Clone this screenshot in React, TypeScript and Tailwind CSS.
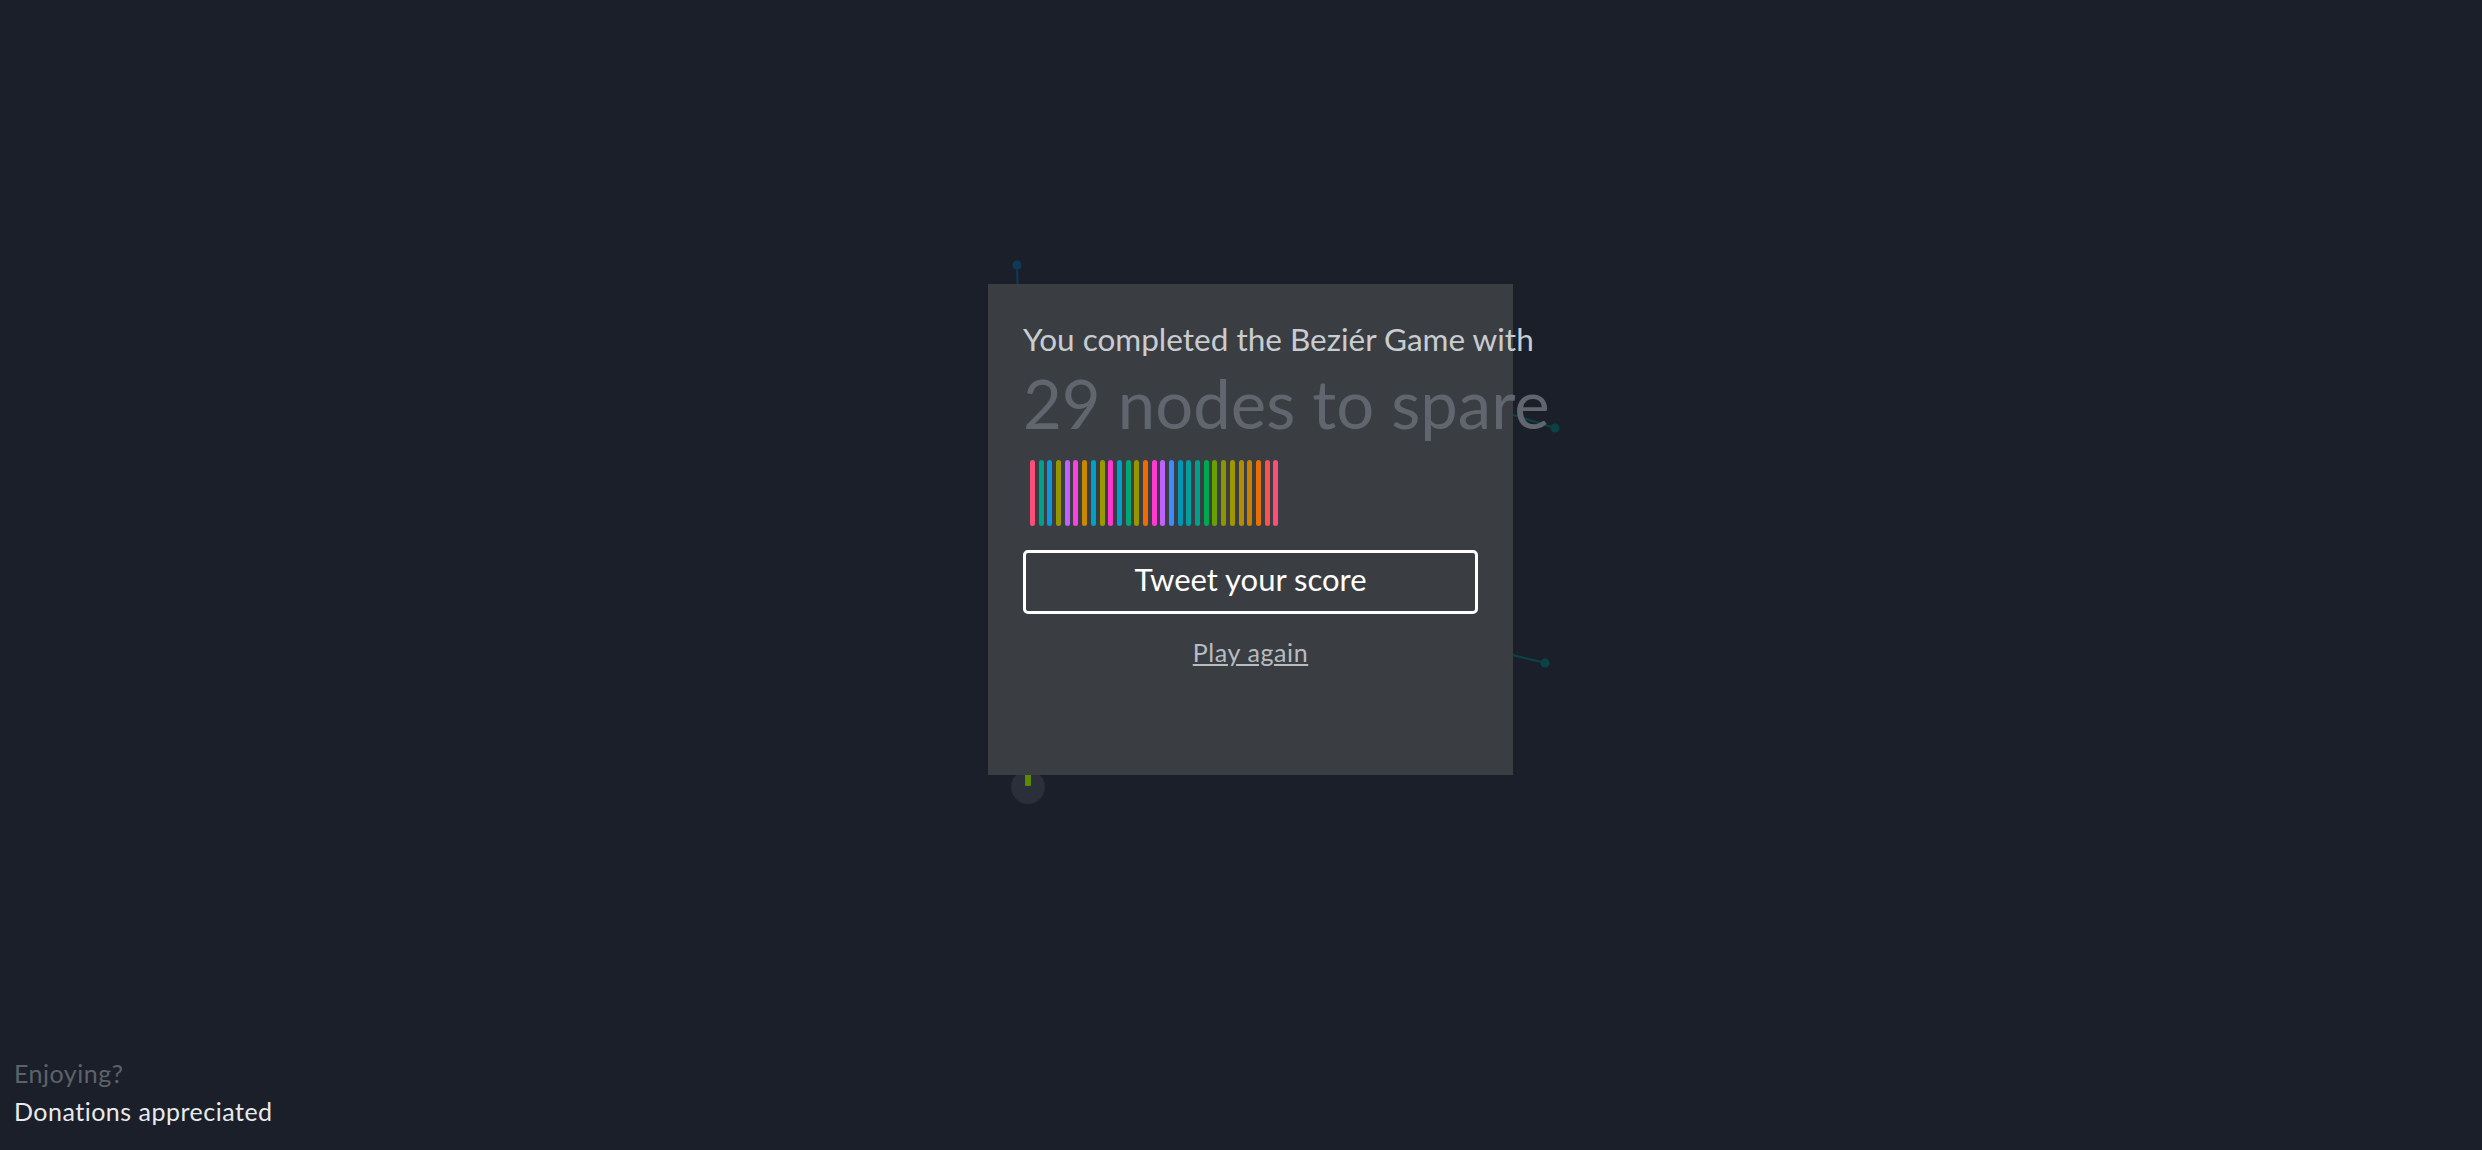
const barColors = [
  "#ff4d7a", "#00a08c", "#0a96e0", "#969600", "#c060ff", "#ff40e0", "#c88800",
  "#00a0c8", "#9a9a00", "#ff35d0", "#00a0c8", "#00a878", "#969600", "#f06a00",
  "#ff3ad0", "#c060ff", "#3a8cff", "#0096b4", "#00a0a0", "#00a08c", "#00a850",
  "#68a000", "#8c9600", "#a09600", "#b48c00", "#c88000", "#e87000", "#ff5050",
  "#ff4d7a",
]

const CanvasNodes = () => (
  <svg className="absolute inset-0 w-full h-full pointer-events-none" aria-hidden="true">
    <line x1="1017" y1="265" x2="1018" y2="300" stroke="#0e3a5a" strokeWidth="2" />
    <circle cx="1017" cy="265" r="4.5" fill="#0e3a5a" />
    <line x1="1500" y1="411" x2="1555" y2="428" stroke="#0c4246" strokeWidth="2" />
    <circle cx="1555" cy="428" r="4.5" fill="#0c4246" />
    <line x1="1500" y1="652" x2="1545" y2="663" stroke="#0c4246" strokeWidth="2" />
    <circle cx="1545" cy="663" r="4.5" fill="#0c4246" />
    <circle cx="1028" cy="787" r="17" fill="#2a2f3a" />
    <rect x="1025" y="770" width="6" height="16" rx="1" fill="#5a8a00" />
  </svg>
)

const App = () => {
  return (
    <div className="relative flex flex-col w-full h-screen overflow-hidden bg-[#1b1f2a] font-['Lato',sans-serif]">
      <CanvasNodes />

      <section className="relative z-10 ml-[988px] mt-[284px] w-[525px] h-[491px] bg-[#3a3e43] px-[35px] pt-[37px]">
        <p className="text-[31.5px] leading-[37px] text-[#c9ccd0] whitespace-nowrap">You completed the Beziér Game with</p>
        <h1 className="mt-[5px] text-[67px] leading-[80px] font-normal text-[#61666e] whitespace-nowrap">29 nodes to spare</h1>

        <div className="flex gap-[3.7px] ml-[7px] mt-[17px]">
          {barColors.map((c, i) => (
            <div key={i} className="w-[5px] h-[66px] rounded-full" style={{ backgroundColor: c }} />
          ))}
        </div>

        <button className="mt-[24px] w-full border-[3px] border-white rounded-[5px] pt-[7px] pb-[13px] text-[31px] leading-[38px] text-white">
          Tweet your score
        </button>

        <p className="mt-[24px] text-center">
          <a href="#" className="text-[25px] leading-[28px] tracking-[0.6px] text-[#b8bcc0] underline">Play again</a>
        </p>
      </section>

      <footer className="relative z-10 mt-auto pl-[14px] pb-[20px] text-[25px] leading-[38px] tracking-[0.5px]">
        <p className="text-[#5d626a]">Enjoying?</p>
        <p className="text-[#e8eaec]">Donations appreciated</p>
      </footer>
    </div>
  )
}

export default App
